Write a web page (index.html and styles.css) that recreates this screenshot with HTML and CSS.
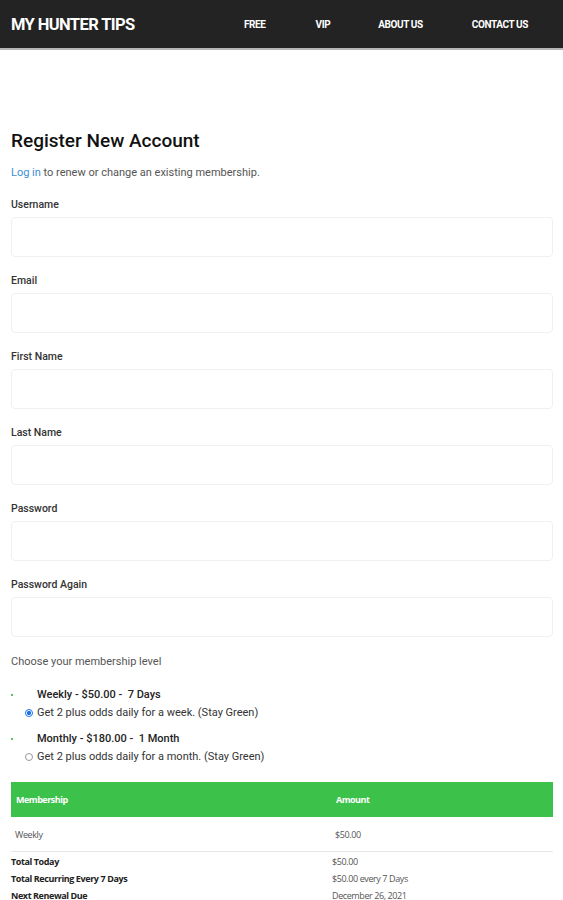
FILE: index.html
```html
<!DOCTYPE html>
<html lang="en">
<head>
    <meta charset="UTF-8">
    <meta name="viewport" content="width=device-width, initial-scale=1.0">
    <title>Register New Account - My Hunter Tips</title>
    <link rel="stylesheet" href="styles.css">
</head>
<body>

    <header class="topbar">
        <div class="logo">MY HUNTER TIPS</div>
        <nav class="nav">
            <a href="#">FREE</a>
            <a href="#">VIP</a>
            <a href="#">ABOUT US</a>
            <a href="#">CONTACT US</a>
        </nav>
    </header>

    <main class="content">
        <h1>Register New Account</h1>
        <p class="login-note"><a href="#">Log in</a> to renew or change an existing membership.</p>

        <form class="register-form">
            <label class="field">
                <span class="field-label">Username</span>
                <input type="text" class="input-field">
            </label>
            <label class="field">
                <span class="field-label">Email</span>
                <input type="email" class="input-field">
            </label>
            <label class="field">
                <span class="field-label">First Name</span>
                <input type="text" class="input-field">
            </label>
            <label class="field">
                <span class="field-label">Last Name</span>
                <input type="text" class="input-field">
            </label>
            <label class="field">
                <span class="field-label">Password</span>
                <input type="password" class="input-field">
            </label>
            <label class="field">
                <span class="field-label">Password Again</span>
                <input type="password" class="input-field">
            </label>

            <p class="level-title">Choose your membership level</p>

            <ul class="levels">
                <li>
                    <div class="level-name">Weekly - $50.00 -&nbsp; 7 Days</div>
                    <label class="level-option">
                        <span class="radio checked"></span>
                        Get 2 plus odds daily for a week. (Stay Green)
                    </label>
                </li>
                <li>
                    <div class="level-name">Monthly - $180.00 -&nbsp; 1 Month</div>
                    <label class="level-option">
                        <span class="radio"></span>
                        Get 2 plus odds daily for a month. (Stay Green)
                    </label>
                </li>
            </ul>

            <table class="summary">
                <thead>
                    <tr>
                        <th>Membership</th>
                        <th>Amount</th>
                    </tr>
                </thead>
                <tbody>
                    <tr>
                        <td>Weekly</td>
                        <td>$50.00</td>
                    </tr>
                </tbody>
            </table>

            <div class="totals">
                <div class="total-name">Total Today</div>
                <div>$50.00</div>
                <div class="total-name">Total Recurring Every 7 Days</div>
                <div>$50.00 every 7 Days</div>
                <div class="total-name">Next Renewal Due</div>
                <div>December 26, 2021</div>
            </div>
        </form>
    </main>

</body>
</html>
```

FILE: styles.css
```css
body {
    margin: 0;
    font-family: Roboto, "Liberation Sans", sans-serif;
    background-color: #ffffff;
    color: #222;
}
.topbar {
    display: flex;
    align-items: center;
    height: 48px;
    padding: 0 11px;
    background-color: #232323;
    border-bottom: 2px solid #b5b5b5;
}
.logo {
    color: #ffffff;
    font-size: 16.5px;
    font-weight: bold;
    letter-spacing: -0.6px;
    width: 218px;
}
.nav {
    display: flex;
}
.nav a {
    color: #ffffff;
    font-size: 10px;
    font-weight: bold;
    letter-spacing: -0.4px;
    text-decoration: none;
}
.nav a:nth-child(1) { margin-left: 15px; }
.nav a:nth-child(2) { margin-left: 50px; }
.nav a:nth-child(3) { margin-left: 48px; }
.nav a:nth-child(4) { margin-left: 49px; }

.content {
    padding: 79px 10px 0 11px;
}
h1 {
    font-size: 19px;
    font-weight: 500;
    margin: 0 0 14px;
    color: #111;
}
.login-note {
    font-size: 11px;
    color: #555;
    margin: 0 0 19px;
}
.login-note a {
    color: #3a8fd6;
    text-decoration: none;
}
.field {
    display: block;
    margin-bottom: 17px;
}
.field-label {
    display: block;
    font-size: 10.5px;
    font-weight: 500;
    line-height: 14px;
    color: #333;
    margin-bottom: 5px;
}
.input-field {
    display: block;
    box-sizing: border-box;
    width: 100%;
    height: 40px;
    border: 1px solid #f0f0f0;
    border-radius: 4px;
    background: #fff;
}
.level-title {
    font-size: 11px;
    color: #555;
    margin: 18px 0 20px;
}
.levels {
    margin: 0;
    padding: 0 0 0 26px;
    list-style: none;
}
.levels li {
    position: relative;
    margin-bottom: 12px;
}
.levels li::before {
    content: "";
    position: absolute;
    left: -26px;
    top: 6px;
    width: 2px;
    height: 2px;
    background: #5cc060;
}
.level-name {
    font-size: 11px;
    font-weight: 500;
    line-height: 14px;
    color: #222;
    margin-bottom: 4px;
}
.level-option {
    display: flex;
    align-items: center;
    font-size: 11px;
    line-height: 14px;
    color: #333;
    margin-left: -12px;
}
.radio {
    box-sizing: border-box;
    width: 8px;
    height: 8px;
    border: 1px solid #999;
    border-radius: 50%;
    margin-right: 4px;
}
.radio.checked {
    border-color: #1a73e8;
    background: radial-gradient(circle, #1a73e8 45%, #fff 55%);
}
.summary {
    width: 100%;
    border-collapse: collapse;
    margin-top: 18px;
    font-family: "Open Sans", sans-serif;
    font-size: 9px;
}
.summary th {
    background-color: #3cc24a;
    color: #fff;
    text-align: left;
    font-weight: bold;
    height: 35px;
    padding: 0 5px;
    letter-spacing: -0.5px;
}
.summary th:last-child,
.summary td:last-child {
    width: 212px;
}
.summary td {
    height: 34px;
    padding: 0 4px;
    color: #555;
    border-bottom: 1px solid #e6e6e6;
    letter-spacing: -0.4px;
}
.totals {
    display: grid;
    grid-template-columns: 321px 1fr;
    font-family: "Open Sans", sans-serif;
    font-size: 9px;
    line-height: 17px;
    color: #555;
    padding-top: 1px;
    letter-spacing: -0.4px;
}
.total-name {
    font-weight: bold;
    color: #222;
}
```
